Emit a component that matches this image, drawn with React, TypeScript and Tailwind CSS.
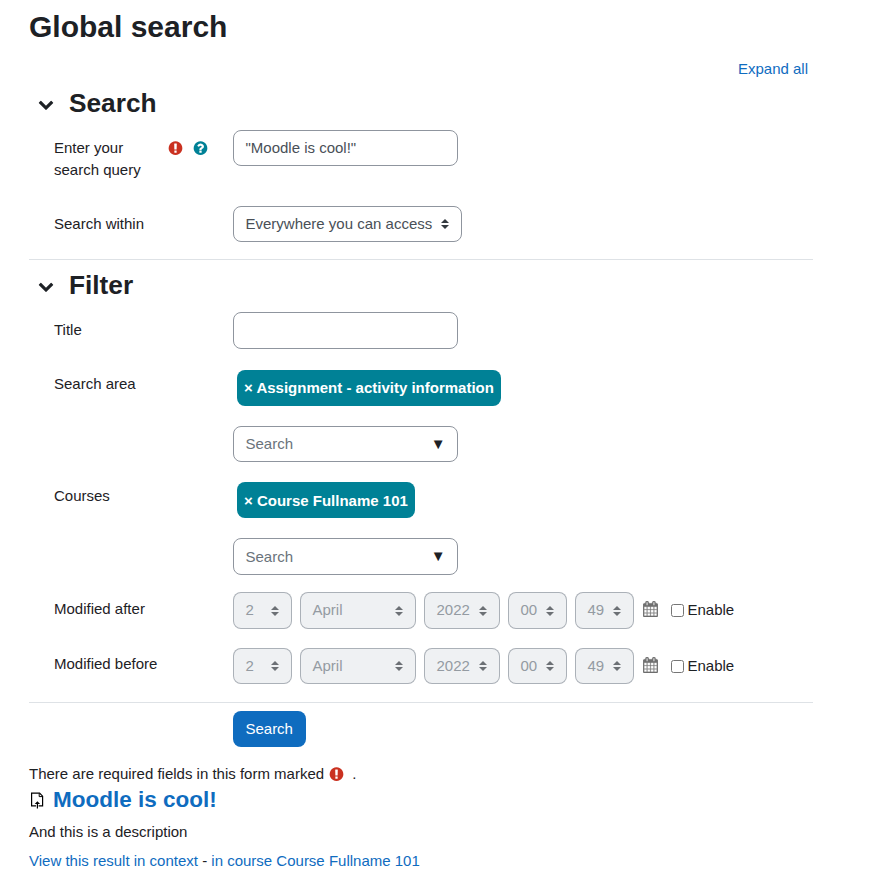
import type { ReactNode } from "react";

type IconProps = { className?: string };

function ChevronDown({ className }: IconProps) {
  return (
    <svg viewBox="0 0 1792 1792" fill="currentColor" className={className}>
      <path d="M1683 808l-742 741q-19 19-45 19t-45-19l-742-741q-19-19-19-45.5t19-45.5l166-165q19-19 45-19t45 19l531 531 531-531q19-19 45-19t45 19l166 165q19 19 19 45.5t-19 45.5z" />
    </svg>
  );
}

function RequiredIcon({ className }: IconProps) {
  return (
    <svg viewBox="56 -20 1792 1792" fill="#ca3120" className={className}>
      <path d="M896 128q209 0 385.5 103t279.5 279.5 103 385.5-103 385.5-279.5 279.5-385.5 103-385.5-103-279.5-279.5-103-385.5 103-385.5 279.5-279.5 385.5-103zm128 1247v-190q0-14-9-23.5t-22-9.5h-192q-13 0-23 10t-10 23v190q0 13 10 23t23 10h192q13 0 22-9.5t9-23.5zm-2-344l18-621q0-12-10-18-10-8-24-8h-220q-14 0-24 8-10 6-10 18l17 621q0 10 10 17.5t24 7.5h185q14 0 23.5-7.5t10.5-17.5z" />
    </svg>
  );
}

function HelpIcon({ className }: IconProps) {
  return (
    <svg viewBox="56 -20 1792 1792" fill="#008196" className={className}>
      <path d="M1024 1376v-192q0-14-9-23t-23-9h-192q-14 0-23 9t-9 23v192q0 14 9 23t23 9h192q14 0 23-9t9-23zm256-672q0-88-55.5-163t-138.5-116-170-41q-243 0-371 213-15 24 8 42l132 100q7 6 19 6 16 0 25-12 53-68 86-92 34-24 86-24 48 0 85.5 26t37.5 59q0 38-20 61t-68 45q-63 28-115.5 86.5t-52.5 125.5v36q0 14 9 23t23 9h192q14 0 23-9t9-23q0-19 21.5-49.5t54.5-49.5q32-18 49-28.5t46-35 44.5-48 28-60.5 12.5-81zm384 192q0 209-103 385.5t-279.5 279.5-385.5 103-385.5-103-279.5-279.5-103-385.5 103-385.5 279.5-279.5 385.5-103 385.5 103 279.5 279.5 103 385.5z" />
    </svg>
  );
}

function CalendarIcon({ className }: IconProps) {
  return (
    <svg viewBox="0 0 1664 1792" fill="currentColor" stroke="currentColor" strokeWidth="24" className={className}>
      <path d="M128 1664h288v-288h-288v288zm352 0h320v-288h-320v288zm-352-352h288v-320h-288v320zm352 0h320v-320h-320v320zm-352-384h288v-288h-288v288zm736 736h320v-288h-320v288zm-384-736h320v-288h-320v288zm768 736h288v-288h-288v288zm-384-352h320v-320h-320v320zm-352-864v-288q0-13-9.5-22.5t-22.5-9.5h-64q-13 0-22.5 9.5t-9.5 22.5v288q0 13 9.5 22.5t22.5 9.5h64q13 0 22.5-9.5t9.5-22.5zm736 864h288v-320h-288v320zm-384-384h320v-288h-320v288zm384 0h288v-288h-288v288zm32-480v-288q0-13-9.5-22.5t-22.5-9.5h-64q-13 0-22.5 9.5t-9.5 22.5v288q0 13 9.5 22.5t22.5 9.5h64q13 0 22.5-9.5t9.5-22.5zm384-64v1280q0 52-38 90t-90 38h-1408q-52 0-90-38t-38-90v-1280q0-52 38-90t90-38h128v-96q0-66 47-113t113-47h64q66 0 113 47t47 113v96h384v-96q0-66 47-113t113-47h64q66 0 113 47t47 113v96h128q52 0 90 38t38 90z" />
    </svg>
  );
}

function AssignmentIcon({ className }: IconProps) {
  return (
    <svg viewBox="0 0 16 18" fill="none" stroke="#000" strokeWidth="1.2" className={className}>
      <path d="M7 13.9H2.6V1.2h8l3 3v9.7H9.6" />
      <path d="M10.2 1.4v3.2h3.2" strokeWidth="1" />
      <path d="M8.4 16.6V10.5" />
      <path d="M5.7 12L8.4 9.2l2.7 2.8z" fill="#000" stroke="none" />
    </svg>
  );
}

function Select({ value, width, disabled }: { value: string; width: string; disabled?: boolean }) {
  return (
    <div
      className={`flex h-[36.5px] items-center justify-between rounded-lg border pr-3 pl-[11.5px] ${width} ${
        disabled ? "border-[#8f959e]/70 bg-[#eff1f3] text-[#949ba2]" : "border-[#8f959e] bg-white text-[#495057]"
      }`}
    >
      <span className="whitespace-nowrap">{value}</span>
      <svg viewBox="0 0 4 5" className={`h-2.5 w-2 shrink-0 ${disabled ? "fill-[#6c7075]" : "fill-[#343a40]"}`}>
        <path d="M2 0L0 2h4zm0 5L0 3h4z" />
      </svg>
    </div>
  );
}

function Row({ label, icons, height, children }: { label: string; icons?: ReactNode; height: string; children: ReactNode }) {
  return (
    <div className={`flex pl-[25px] ${height}`}>
      <div className="flex w-[179px] shrink-0 pt-[7px]">
        <span className="w-[114px]">{label}</span>
        {icons}
      </div>
      <div>{children}</div>
    </div>
  );
}

function SectionHeading({ title }: { title: string }) {
  return (
    <div className="flex h-[34px] items-center pl-[9px]">
      <ChevronDown className="mt-px h-4 w-4" />
      <h3 className="ml-[15px] text-[26.25px] leading-[34px] font-bold">{title}</h3>
    </div>
  );
}

function Autocomplete({ tag }: { tag: string }) {
  return (
    <>
      <div className="mt-1 ml-1 flex h-9 w-fit items-center rounded-lg bg-[#008196] px-[7px] pt-[1.4px] font-bold whitespace-pre text-white">
        × {tag}
      </div>
      <div className="mt-5 flex h-[36.5px] w-[225px] items-center justify-between rounded-lg border border-[#8f959e] pr-[11.5px] pl-[11.5px]">
        <span className="pt-[0.8px] text-[#6a737b]">Search</span>
        <span>▼</span>
      </div>
    </>
  );
}

function DateSelector() {
  return (
    <div className="mt-[1.6px] flex items-center">
      <div className="flex gap-2">
        <Select value="2" width="w-[59px]" disabled />
        <Select value="April" width="w-[116px]" disabled />
        <Select value="2022" width="w-[76px]" disabled />
        <Select value="00" width="w-[59px]" disabled />
        <Select value="49" width="w-[59px]" disabled />
      </div>
      <CalendarIcon className="mr-[13px] mb-[3px] ml-[9px] h-4 w-[15px] text-[#6f6f6f]" />
      <label className="flex items-center gap-[3.5px]">
        <input type="checkbox" className="h-[13px] w-[13px]" />
        Enable
      </label>
    </div>
  );
}

export default function App() {
  return (
    <div className="min-h-[886px] bg-white pt-[9px] pl-[29px] font-['Liberation_Sans',Arial,sans-serif] text-[15px] leading-[22.5px] text-[#1d2125]">
      <div className="w-[784px]">
        <h1 className="text-[30px] leading-9 font-bold">Global search</h1>
        <div className="mt-[12.5px] mb-1.5 pr-[5px] text-right">
          <a className="text-[#0f6cbf]">Expand all</a>
        </div>

        <section className="h-[174px] border-b border-[#dee2e6]">
          <SectionHeading title="Search" />
          <div className="pt-[9.9px]">
            <Row
              label="Enter your search query"
              height="h-[76px]"
              icons={
                <div className="flex gap-[9px] pt-[3px]">
                  <RequiredIcon className="h-4 w-4" />
                  <HelpIcon className="h-4 w-4" />
                </div>
              }
            >
              <div className="flex h-[36.5px] w-[225px] items-center rounded-lg border border-[#8f959e] pl-[11.5px] text-[#495057]">
                "Moodle is cool!"
              </div>
            </Row>
            <Row label="Search within" height="h-[37px]">
              <Select value="Everywhere you can access" width="w-[229px]" />
            </Row>
          </div>
        </section>

        <section className="mt-2 h-[435px] border-b border-[#dee2e6]">
          <SectionHeading title="Filter" />
          <div className="pt-2.5">
            <Row label="Title" height="h-[53.9px]">
              <div className="h-[36.5px] w-[225px] rounded-lg border border-[#8f959e]" />
            </Row>
            <Row label="Search area" height="h-[112.3px]">
              <Autocomplete tag="Assignment - activity information" />
            </Row>
            <Row label="Courses" height="h-[112.5px]">
              <Autocomplete tag="Course Fullname 101" />
            </Row>
            <Row label="Modified after" height="h-[55.6px]">
              <DateSelector />
            </Row>
            <Row label="Modified before" height="h-[55.5px]">
              <DateSelector />
            </Row>
          </div>
        </section>

        <button className="mt-2 ml-[204px] block h-9 w-[73px] rounded-lg bg-[#0f6cbf] pr-[0.6px] text-white">Search</button>

        <div className="mt-4 flex items-center">
          There are required fields in this form marked
          <RequiredIcon className="mr-[7px] ml-[5px] h-4 w-4" />.
        </div>
        <div className="flex h-[27px] items-center">
          <AssignmentIcon className="mt-[3px] h-[18px] w-4" />
          <h4 className="ml-2 text-[22.5px] leading-[27px] font-bold text-[#0f6cbf]">Moodle is cool!</h4>
        </div>
        <p className="mt-2">And this is a description</p>
        <p className="mt-[6.5px]">
          <a className="text-[#0f6cbf]">View this result in context</a> -{" "}
          <a className="text-[#0f6cbf]">in course Course Fullname 101</a>
        </p>
      </div>
    </div>
  );
}
